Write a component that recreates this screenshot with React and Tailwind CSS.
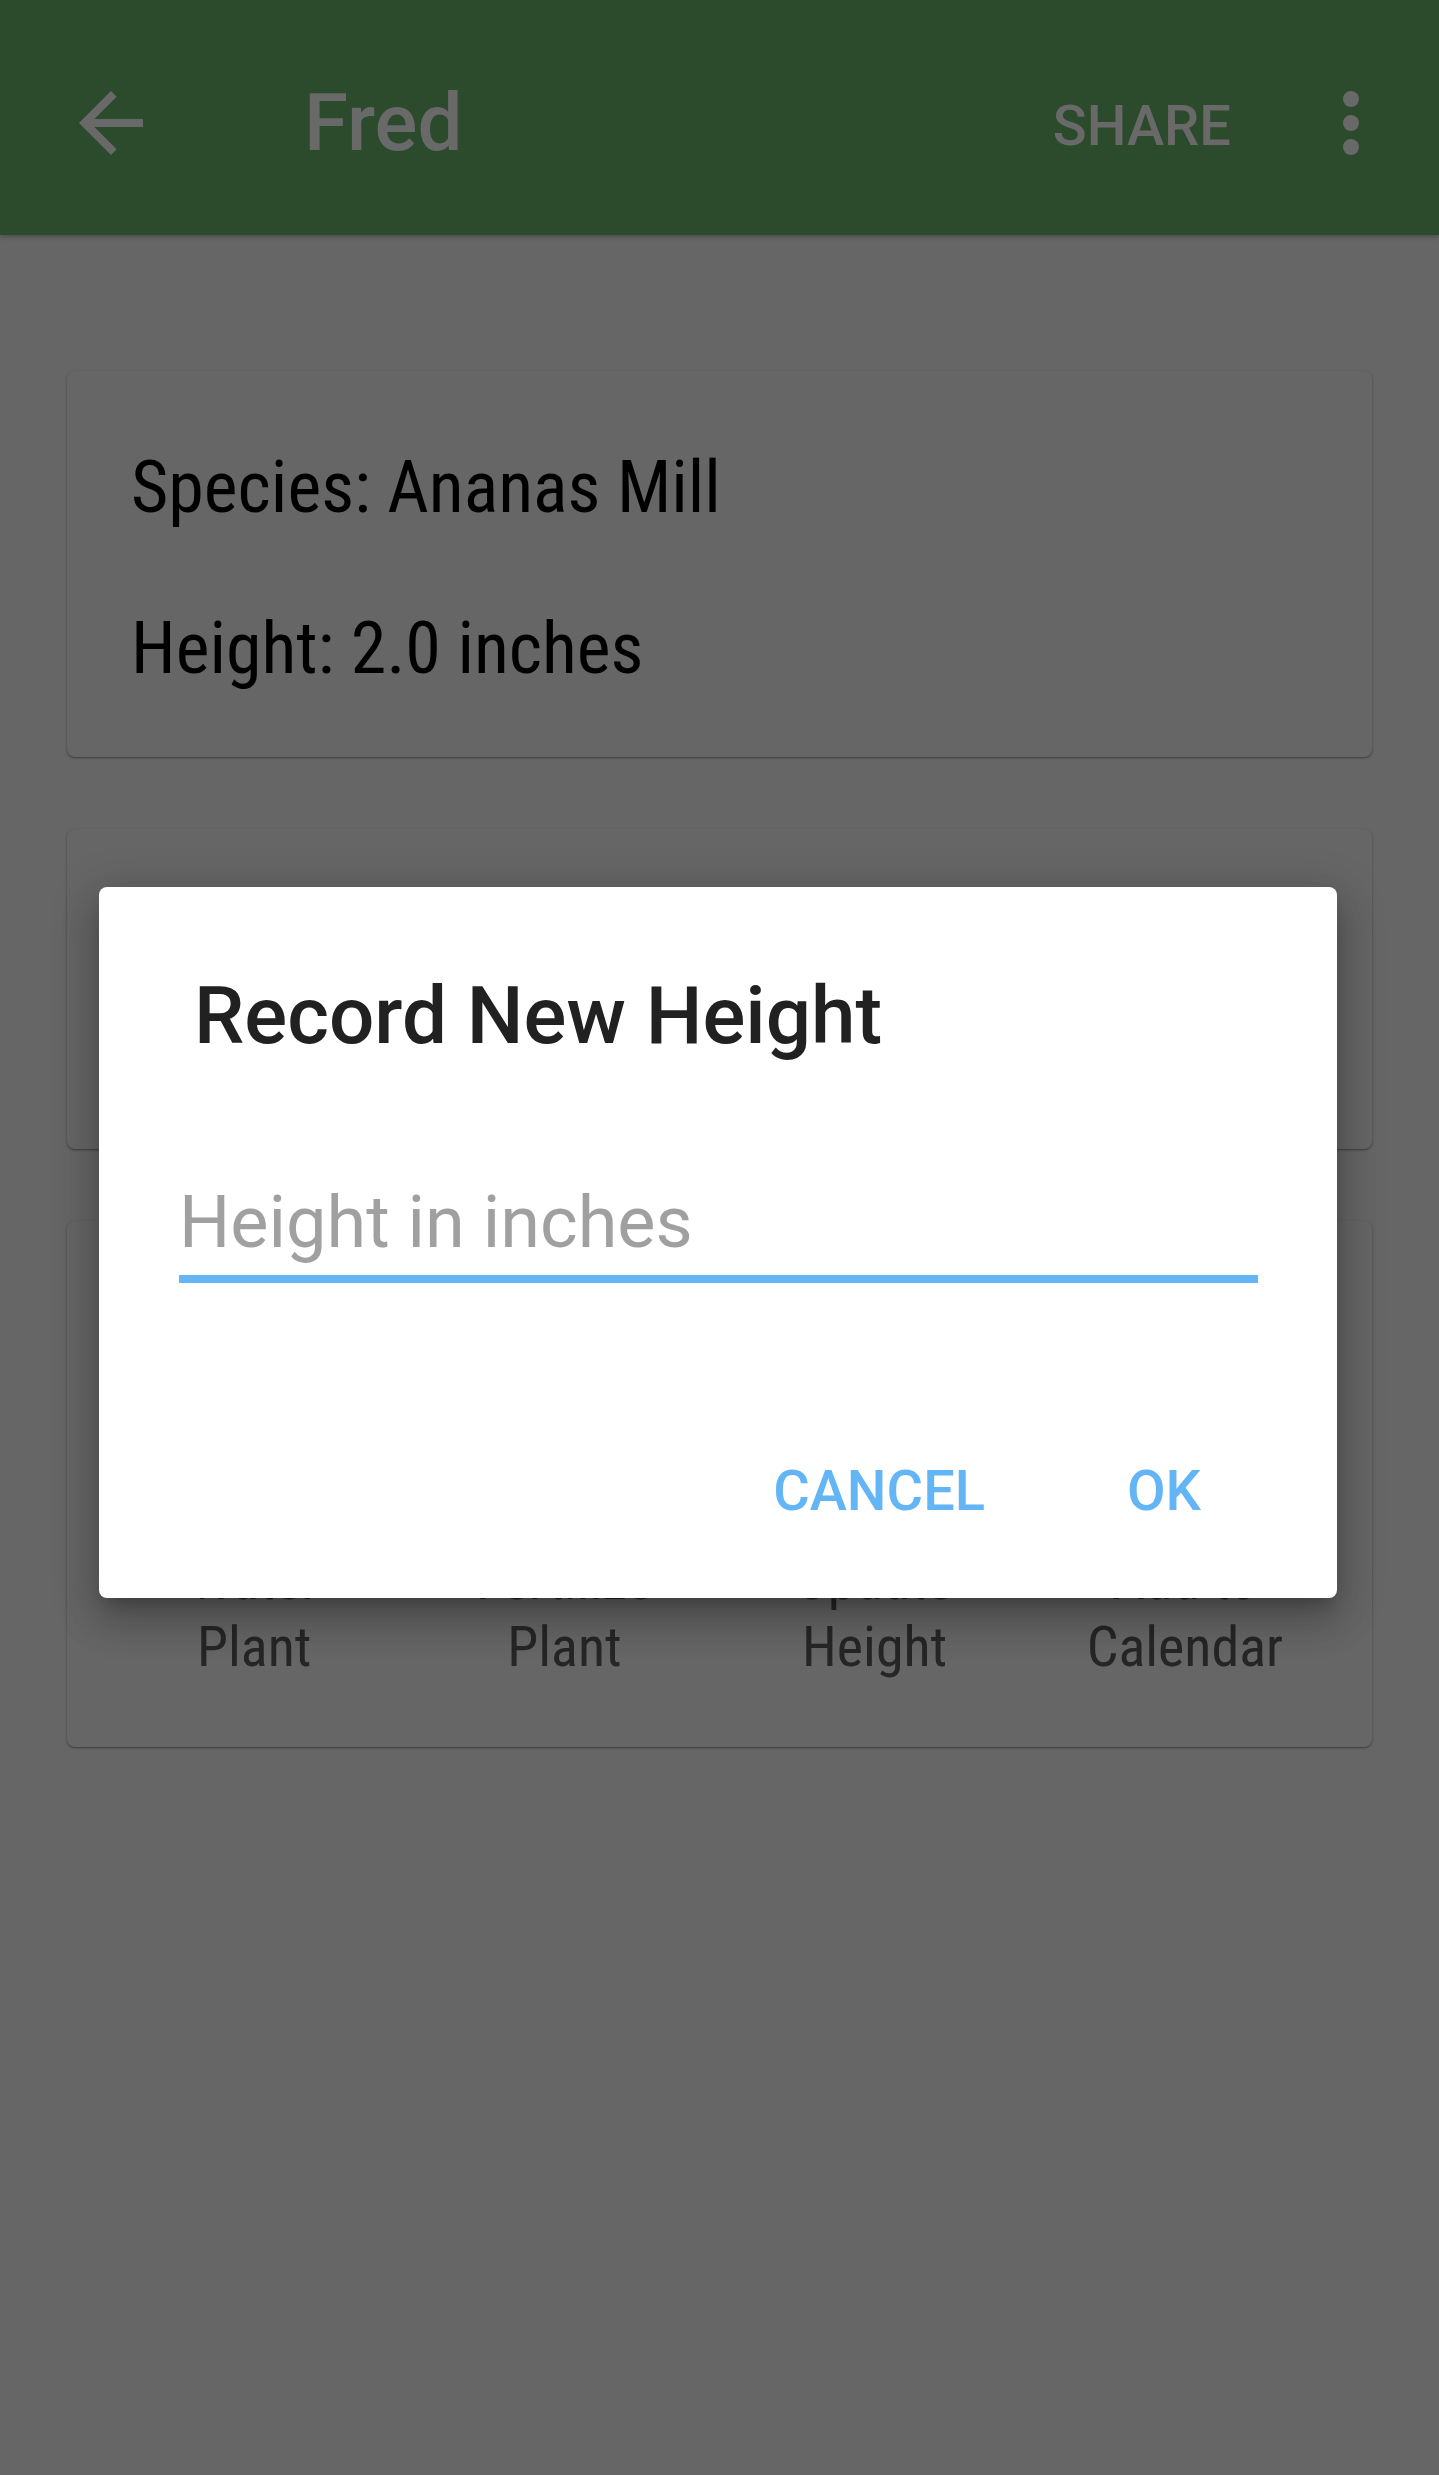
import React from 'react';
import { Droplets, Sprout, Ruler, CalendarPlus } from 'lucide-react';

const condensed = "font-['Roboto_Condensed','Roboto',sans-serif] [font-stretch:87.5%]";

const actions = [
  { icon: Droplets, lines: ['Water', 'Plant'] },
  { icon: Sprout, lines: ['Fertilize', 'Plant'] },
  { icon: Ruler, lines: ['Update', 'Height'] },
  { icon: CalendarPlus, lines: ['Add to', 'Calendar'] },
];

const cardClass =
  'rounded-[8px] bg-[#666666] shadow-[0_1px_3px_rgba(0,0,0,0.28),0_1px_1px_rgba(0,0,0,0.16)]';

const PlantDetail = () => {
  return (
    <div className="relative min-h-screen bg-[#666666] font-['Roboto',sans-serif]">
      {/* app bar */}
      <header className="flex h-[235px] items-center bg-[#2c4a2c] pl-[63px] pr-[40px] pt-[11px] text-[#696969] shadow-[0_2px_4px_rgba(0,0,0,0.25)]">
        <svg width="96" height="96" viewBox="0 0 24 24" fill="currentColor">
          <path d="M20 11H7.83l5.59-5.59L12 4l-8 8 8 8 1.41-1.41L7.83 13H20v-2z" />
        </svg>
        <h1 className="ml-[145px] text-[80px] font-medium leading-[96px]">Fred</h1>
        <span className="ml-auto mt-[6px] text-[56px] font-medium leading-[64px]">SHARE</span>
        <svg className="ml-[72px]" width="96" height="96" viewBox="0 0 24 24" fill="currentColor">
          <circle cx="12" cy="6" r="2" />
          <circle cx="12" cy="12" r="2" />
          <circle cx="12" cy="18" r="2" />
        </svg>
      </header>

      <main className="flex flex-col gap-[72px] px-[67px] pt-[136px]">
        <div className={`${cardClass} pb-[28px] pl-[64px] pt-[36px]`}>
          <p className={`${condensed} text-[72px] leading-[161px] text-black`}>Species: Ananas Mill</p>
          <p className={`${condensed} text-[72px] leading-[161px] text-black`}>Height: 2.0 inches</p>
        </div>

        <div className={`${cardClass} h-[320px]`} />

        <div className={`${cardClass} grid h-[526px] grid-cols-4 px-[32px] pt-[66px]`}>
          {actions.map(({ icon: Icon, lines }) => (
            <div key={lines.join(' ')} className="flex flex-col items-center">
              <div className="flex h-[260px] items-center justify-center">
                <Icon size={140} className="text-[#262626]" />
              </div>
              {lines.map((line) => (
                <span key={line} className={`${condensed} text-[56px] leading-[67px] text-[#262626]`}>
                  {line}
                </span>
              ))}
            </div>
          ))}
        </div>
      </main>

      {/* dialog */}
      <div className="absolute left-[99px] top-[887px] flex h-[711px] w-[1238px] flex-col rounded-[8px] bg-white pt-[81px] shadow-[0_24px_38px_3px_rgba(0,0,0,0.16),0_9px_46px_8px_rgba(0,0,0,0.14),0_11px_15px_-7px_rgba(0,0,0,0.22)]">
        <h2 className="pl-[95px] text-[80px] font-medium leading-[96px] text-[#212121]">Record New Height</h2>
        <div className="ml-[80px] mr-[79px] mt-[116px] border-b-[8px] border-[#64b5f6] pb-[9px]">
          <input
            type="text"
            placeholder="Height in inches"
            className="block h-[86px] w-full bg-transparent text-[72px] leading-[86px] text-[#212121] outline-none placeholder:text-[#a0a0a0]"
          />
        </div>
        <div className="mt-[176px] flex justify-end gap-[142px] pr-[136px] text-[56px] font-medium leading-[64px] text-[#64b5f6]">
          <button type="button">CANCEL</button>
          <button type="button">OK</button>
        </div>
      </div>
    </div>
  );
};

export default PlantDetail;
